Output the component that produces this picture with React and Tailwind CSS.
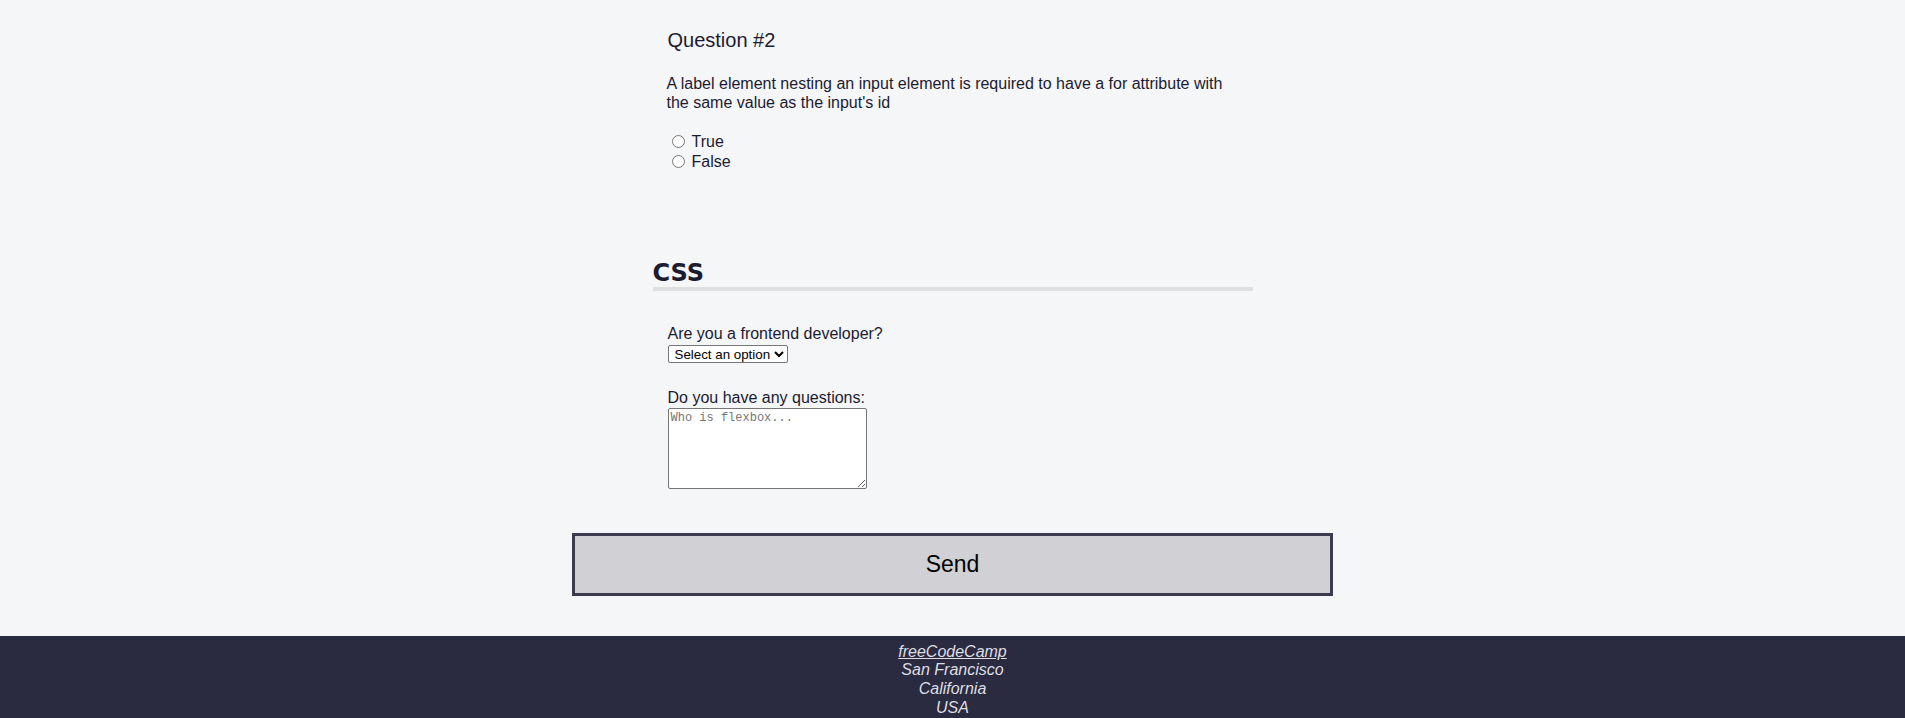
export default function App() {
  return (
    <div
      className="min-h-screen bg-[#f5f6f7] text-[#1b1b32] flex flex-col"
      style={{ fontFamily: '"Liberation Sans", Arial, Helvetica, sans-serif' }}
    >
      <main className="pt-[29px]">
        <section className="mx-auto w-[80%] max-w-[600px]">
          <p className="pl-[15px] text-[20px] leading-[23px]">Question #2</p>
          <fieldset className="mt-[22px] mx-[2px] px-[12px]">
            <div className="text-[16px] leading-[19px]">
              A label element nesting an input element is required to have a for attribute with the same value as the input's id
            </div>
            <ul className="mt-[21px] list-none">
              <li className="flex items-start h-[19.5px]">
                <label className="flex items-start text-[16px] leading-[18.4px]">
                  <input type="radio" name="q2" value="true" className="mt-[2px] ml-[5px] mr-[7px] w-[13px] h-[13px]" />
                  True
                </label>
              </li>
              <li className="flex items-start h-[19.5px]">
                <label className="flex items-start text-[16px] leading-[18.4px]">
                  <input type="radio" name="q2" value="false" className="mt-[2px] ml-[5px] mr-[7px] w-[13px] h-[13px]" />
                  False
                </label>
              </li>
            </ul>
          </fieldset>
        </section>

        <section className="mx-auto w-[80%] max-w-[600px] mt-[87px]">
          <h2
            className="text-[24px] leading-[28px] font-bold border-b-4 border-[#dfdfe2]"
            style={{ fontFamily: '"DejaVu Sans", Verdana, Tahoma, sans-serif' }}
          >
            CSS
          </h2>
          <div className="px-[15px]">
            <label htmlFor="frontend" className="block mt-[34px] text-[16px] leading-[18.4px]">
              Are you a frontend developer?
            </label>
            <select
              id="frontend"
              className="block mt-[2px] h-[18px] w-[120px] text-[13.33px] leading-[16px] bg-white text-black border border-[#767676] rounded-[2px] pl-[2px]"
              defaultValue=""
            >
              <option value="">Select an option</option>
              <option value="yes">Yes</option>
              <option value="no">No</option>
            </select>
            <label htmlFor="questions" className="block mt-[26px] text-[16px] leading-[18.4px]">
              Do you have any questions:
            </label>
            <textarea
              id="questions"
              placeholder="Who is flexbox..."
              className="block w-[199px] h-[81px] bg-white border border-[#767676] rounded-[2px] px-[2px] py-[2px] text-[12px] leading-[15px] resize placeholder:text-[#757575]"
              style={{ fontFamily: '"Liberation Mono", "DejaVu Sans Mono", monospace' }}
            ></textarea>
          </div>
        </section>

        <button className="block mx-auto mt-[44px] mb-[40px] w-[761px] h-[63px] bg-[#d0d0d5] border-[3px] border-[#3b3b4f] text-[23px] leading-[26px] text-black">
          Send
        </button>
      </main>

      <footer className="bg-[#2a2a40] text-[#dfdfe2] flex justify-center">
        <address className="text-center italic pt-[7px] px-[4.8px] pb-[4.8px] text-[16px] leading-[18.6px]">
          <a href="#" className="underline text-[#dfdfe2]">freeCodeCamp</a>
          <br />
          San Francisco
          <br />
          California
          <br />
          USA
        </address>
      </footer>
    </div>
  );
}
